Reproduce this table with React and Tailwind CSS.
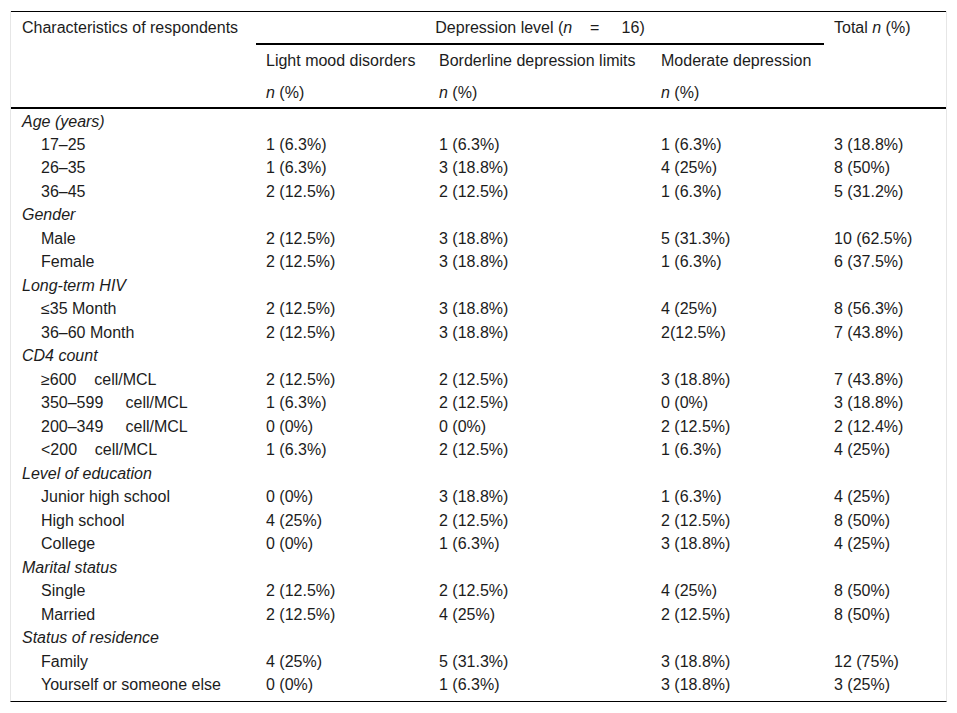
const groups = [
  {
    title: "Age (years)",
    rows: [
      ["17–25", "1 (6.3%)", "1 (6.3%)", "1 (6.3%)", "3 (18.8%)"],
      ["26–35", "1 (6.3%)", "3 (18.8%)", "4 (25%)", "8 (50%)"],
      ["36–45", "2 (12.5%)", "2 (12.5%)", "1 (6.3%)", "5 (31.2%)"],
    ],
  },
  {
    title: "Gender",
    rows: [
      ["Male", "2 (12.5%)", "3 (18.8%)", "5 (31.3%)", "10 (62.5%)"],
      ["Female", "2 (12.5%)", "3 (18.8%)", "1 (6.3%)", "6 (37.5%)"],
    ],
  },
  {
    title: "Long-term HIV",
    rows: [
      ["≤35 Month", "2 (12.5%)", "3 (18.8%)", "4 (25%)", "8 (56.3%)"],
      ["36–60 Month", "2 (12.5%)", "3 (18.8%)", "2(12.5%)", "7 (43.8%)"],
    ],
  },
  {
    title: "CD4 count",
    rows: [
      ["≥600\u00a0\u00a0\u00a0\u00a0cell/MCL", "2 (12.5%)", "2 (12.5%)", "3 (18.8%)", "7 (43.8%)"],
      ["350–599\u00a0\u00a0\u00a0\u00a0\u00a0cell/MCL", "1 (6.3%)", "2 (12.5%)", "0 (0%)", "3 (18.8%)"],
      ["200–349\u00a0\u00a0\u00a0\u00a0\u00a0cell/MCL", "0 (0%)", "0 (0%)", "2 (12.5%)", "2 (12.4%)"],
      ["<200\u00a0\u00a0\u00a0\u00a0cell/MCL", "1 (6.3%)", "2 (12.5%)", "1 (6.3%)", "4 (25%)"],
    ],
  },
  {
    title: "Level of education",
    rows: [
      ["Junior high school", "0 (0%)", "3 (18.8%)", "1 (6.3%)", "4 (25%)"],
      ["High school", "4 (25%)", "2 (12.5%)", "2 (12.5%)", "8 (50%)"],
      ["College", "0 (0%)", "1 (6.3%)", "3 (18.8%)", "4 (25%)"],
    ],
  },
  {
    title: "Marital status",
    rows: [
      ["Single", "2 (12.5%)", "2 (12.5%)", "4 (25%)", "8 (50%)"],
      ["Married", "2 (12.5%)", "4 (25%)", "2 (12.5%)", "8 (50%)"],
    ],
  },
  {
    title: "Status of residence",
    rows: [
      ["Family", "4 (25%)", "5 (31.3%)", "3 (18.8%)", "12 (75%)"],
      ["Yourself or someone else", "0 (0%)", "1 (6.3%)", "3 (18.8%)", "3 (25%)"],
    ],
  },
];

export default function App() {
  return (
    <div className="bg-white text-[#1c1c1c] text-[16px] min-h-[713px] pt-[11px] font-['Liberation_Sans',Arial,sans-serif]">
      <div className="ml-[10px] w-[937px] border-x border-x-[#e6e6e6] pb-[6px] border-b border-b-black">
        <table className="table-fixed border-collapse w-[935px] font-['Liberation_Sans',Arial,sans-serif] text-[16px]">
          <colgroup>
            <col className="w-[245px]" />
            <col className="w-[173px]" />
            <col className="w-[222px]" />
            <col className="w-[173px]" />
            <col className="w-[122px]" />
          </colgroup>
          <thead>
            <tr className="h-[32px] border-t border-black">
              <td rowSpan={3} className="align-top pl-[11px] pt-[7px] leading-[17px]">
                Characteristics of respondents
              </td>
              <td colSpan={3} className="text-center align-top pt-[7px] leading-[17px] border-b-2 border-black">
                Depression level (<i>n</i>
                {"\u00a0\u00a0\u00a0\u00a0=\u00a0\u00a0\u00a0\u00a0\u00a0"}16)
              </td>
              <td rowSpan={3} className="align-top pl-[10px] pt-[7px] leading-[17px]">
                Total <i>n</i> (%)
              </td>
            </tr>
            <tr className="h-[32px]">
              <td className="pl-[10px] leading-[17px] whitespace-nowrap">Light mood disorders</td>
              <td className="pl-[10px] leading-[17px] whitespace-nowrap">Borderline depression limits</td>
              <td className="pl-[10px] leading-[17px] whitespace-nowrap">Moderate depression</td>
            </tr>
            <tr className="h-[32px] border-b-2 border-black">
              <td className="pl-[10px] pt-[2px] leading-[17px]">
                <i>n</i> (%)
              </td>
              <td className="pl-[10px] pt-[2px] leading-[17px]">
                <i>n</i> (%)
              </td>
              <td className="pl-[10px] pt-[2px] leading-[17px]">
                <i>n</i> (%)
              </td>
            </tr>
          </thead>
          <tbody>
            {groups.map((g) => (
              <>
                <tr key={g.title} className="h-[23.5px]">
                  <td colSpan={5} className="pl-[11px] pt-[3px] italic leading-[17px]">
                    {g.title}
                  </td>
                </tr>
                {g.rows.map((r, i) => (
                  <tr key={g.title + i} className="h-[23.5px]">
                    <td className="pl-[30px] pt-[3px] leading-[17px] whitespace-nowrap">{r[0]}</td>
                    <td className="pl-[10px] pt-[3px] leading-[17px]">{r[1]}</td>
                    <td className="pl-[10px] pt-[3px] leading-[17px]">{r[2]}</td>
                    <td className="pl-[10px] pt-[3px] leading-[17px]">{r[3]}</td>
                    <td className="pl-[10px] pt-[3px] leading-[17px] whitespace-nowrap">{r[4]}</td>
                  </tr>
                ))}
              </>
            ))}
          </tbody>
        </table>
      </div>
    </div>
  );
}
